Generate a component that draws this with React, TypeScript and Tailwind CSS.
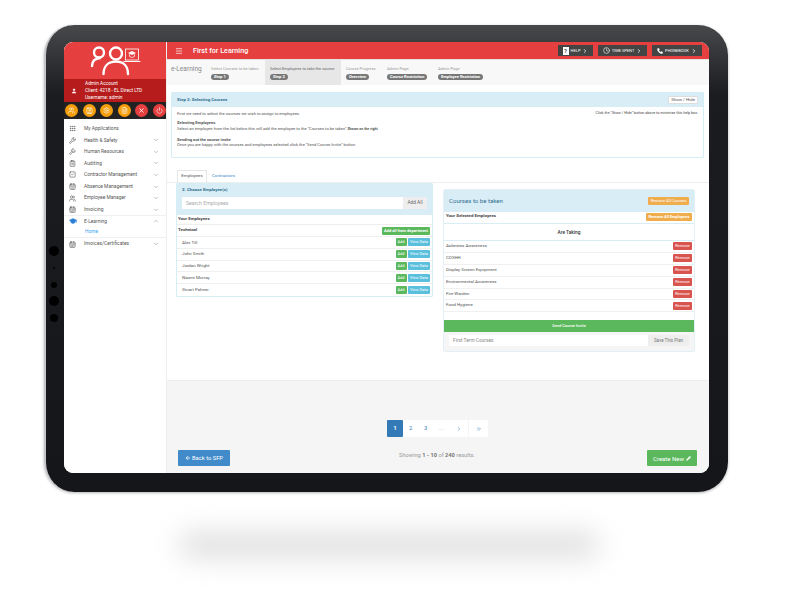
import {
  Wrench,
  Gavel,
  ClipboardList,
  SquareCheck,
  CalendarDays,
  Users,
  CalendarRange,
  GraduationCap,
  ChevronDown,
  ChevronUp,
  ChevronRight,
  ChevronsRight,
  Menu,
  User,
  Contact,
  Settings,
  Clock,
  Phone,
  Power,
  X,
  ArrowLeft,
  Pencil,
  Grip,
  FileText,
} from "lucide-react";

const menu = [
  { label: "My Applications", icon: Grip, arrow: false },
  { label: "Health & Safety", icon: Wrench, arrow: true },
  { label: "Human Resources", icon: Gavel, arrow: true },
  { label: "Auditing", icon: ClipboardList, arrow: true },
  { label: "Contractor Management", icon: SquareCheck, arrow: true },
  { label: "Absence Management", icon: CalendarDays, arrow: true },
  { label: "Employee Manager", icon: Users, arrow: true },
  { label: "Invoicing", icon: CalendarRange, arrow: true },
];

const steps = [
  { title: "Select Courses to be taken", pill: "Step 1", width: "w-[59px]" },
  { title: "Select Employees to take the course", pill: "Step 2", width: "w-[76px]", active: true },
  { title: "Course Progress", pill: "Overview", width: "w-[41px]" },
  { title: "Admin Page", pill: "Course Restriction", width: "w-[51px]" },
  { title: "Admin Page", pill: "Employee Restriction", width: "w-[60px]" },
];

const employees = ["Alex Till", "John Smith", "Jordan Wright", "Naomi Murray", "Stuart Palmer"];
const courses = [
  "Asbestos Awareness",
  "COSHH",
  "Display Screen Equipment",
  "Environmental Awareness",
  "Fire Warden",
  "Food Hygiene",
];

function Logo() {
  return (
    <svg width="54" height="34" viewBox="0 0 54 34" fill="none" stroke="white" strokeWidth="2.4" strokeLinecap="round">
      <circle cx="11" cy="10.5" r="5" />
      <path d="M4 24c0-5 3-7.5 8-8" />
      <circle cx="28" cy="11.5" r="6" />
      <path d="M15.5 32c0-8 5-12.5 12.5-12.5S40 24 40 32" />
      <rect x="37.5" y="7" width="13" height="11" strokeWidth="0.8" />
      <path d="M36 19.5h16" strokeWidth="1" />
      <path d="M44 9l4 2-4 2-4-2z" fill="white" stroke="none" />
      <path d="M41.5 12.5v2l2.5 1 2.5-1v-2" strokeWidth="0.7" />
    </svg>
  );
}

function Sidebar() {
  return (
    <aside className="flex w-[102px] shrink-0 flex-col bg-white">
      <div className="flex h-[37px] items-start justify-center bg-[#e53f3f]">
        <Logo />
      </div>
      <div className="flex h-[23px] items-center bg-[#b71c1c] text-[4.8px] leading-[7px] text-white">
        <div className="flex w-[20px] justify-center">
          <User size={6} fill="white" strokeWidth={1} />
        </div>
        <div className="pl-[1px]">
          <div>Admin Account</div>
          <div>Client: 4218 - EL Direct LTD</div>
          <div>Username: admin</div>
        </div>
      </div>
      <div className="flex h-[17px] items-center justify-between bg-[#222222] pl-[1px]">
        {[Users, Contact, Settings, FileText].map((Icon, i) => (
          <span key={i} className="flex size-[13px] items-center justify-center rounded-full bg-[#f59e0b] text-white">
            <Icon size={7} />
          </span>
        ))}
        <span className="flex size-[13px] items-center justify-center rounded-full bg-[#e53f3f] text-white">
          <X size={7} strokeWidth={3} />
        </span>
        <span className="flex size-[13px] items-center justify-center rounded-full bg-[#e53f3f] text-white">
          <Power size={7} />
        </span>
      </div>
      <nav className="flex flex-col pt-[4px] text-[#555555]">
        {menu.map((item) => (
          <div key={item.label} className="flex h-[11.55px] items-center text-[4.9px]">
            <div className="flex w-[20px] justify-center pr-[3px]">
              <item.icon size={7} strokeWidth={2} />
            </div>
            <span className="flex-1">{item.label}</span>
            {item.arrow && <ChevronDown size={6} className="mr-[7px] text-[#888888]" />}
          </div>
        ))}
        <div className="flex h-[11px] items-center border-t border-[#f0f0f0] text-[4.9px]">
          <div className="flex w-[20px] justify-center pr-[3px] text-[#2b7fd6]">
            <GraduationCap size={8} fill="#2b7fd6" />
          </div>
          <span className="flex-1">E-Learning</span>
          <ChevronUp size={6} className="mr-[7px] text-[#888888]" />
        </div>
        <div className="flex h-[12px] items-center border-b border-[#f0f0f0] pl-[21px] text-[4.9px] text-[#3ea6ee]">
          Home
        </div>
        <div className="flex h-[11.5px] items-center text-[4.9px]">
          <div className="flex w-[20px] justify-center pr-[3px]">
            <CalendarRange size={7} />
          </div>
          <span className="flex-1">Invoices/Certificates</span>
          <ChevronDown size={6} className="mr-[7px] text-[#888888]" />
        </div>
      </nav>
    </aside>
  );
}

function HeaderButton({ label, icon, width }: { label: string; icon: React.ReactNode; width: string }) {
  return (
    <div className={`flex h-[11px] items-center justify-center gap-[2px] bg-[#444444] text-[4px] text-white ${width}`}>
      {icon}
      <span>{label}</span>
      <ChevronRight size={6} strokeWidth={3} />
    </div>
  );
}

function TopBar() {
  return (
    <header className="flex h-[17px] shrink-0 items-center bg-[#e53f3f] text-white">
      <Menu size={8} className="ml-[8px]" />
      <span className="ml-[10px] flex-1 pt-[1px] text-[7.2px] font-medium">First for Learning</span>
      <div className="flex items-center gap-[5px] pr-[7px]">
        <HeaderButton
          label="HELP"
          width="w-[35px]"
          icon={<span className="flex h-[8px] w-[6px] items-center justify-center bg-white text-[6px] font-bold text-[#444444]">?</span>}
        />
        <HeaderButton label="TIME SPENT" width="w-[49px]" icon={<Clock size={7} />} />
        <HeaderButton label="PHONEBOOK" width="w-[50px]" icon={<Phone size={6} fill="white" />} />
      </div>
    </header>
  );
}

function StepBar() {
  return (
    <div className="flex h-[26px] shrink-0 items-stretch border-t border-[#e4e4e4] bg-[#f8f8f8]">
      <div className="w-[39px] pt-[5px] pl-[4px] text-[6.6px] whitespace-nowrap text-[#888888]">e-Learning</div>
      {steps.map((step) => (
        <div
          key={step.pill}
          className={`flex flex-col items-start pt-[6px] pl-[5px] text-[4px] whitespace-nowrap ${step.width} ${
            step.active ? "bg-[#e7e7e7] text-[#666666]" : "text-[#999999]"
          }`}
        >
          <span>{step.title}</span>
          <span className="mt-[1.5px] rounded-full bg-[#777777] px-[3px] text-[4.1px] leading-[6px] font-bold text-white">
            {step.pill}
          </span>
        </div>
      ))}
    </div>
  );
}

function HelpPanel() {
  return (
    <section className="mt-[7px] mr-[5px] ml-[4px] h-[66px] rounded-[1px] border border-[#d6eef5] bg-white">
      <div className="flex h-[14px] items-center justify-between bg-[#d9edf7] pr-[5px] pl-[5px] text-[4.35px] font-bold text-[#31708f]">
        <span>Step 2: Selecting Courses</span>
        <span className="rounded-[1px] border border-[#dddddd] bg-white px-[2px] text-[4.4px] leading-[6px] font-normal text-[#555555]">
          Show / Hide
        </span>
      </div>
      <div className="px-[5px] pt-[4px] text-[4.1px] leading-[5.4px] text-[#555555]">
        <div className="flex justify-between">
          <span>First we need to select the courses we wish to assign to employees.</span>
          <span className="text-[3.7px] text-[#444444]">Click the "Show / Hide" button above to minimise this help box.</span>
        </div>
        <div className="mt-[4px] font-bold">Selecting Employees</div>
        <div>
          Select an employee from the list below this will add the employee to the "Courses to be taken"{" "}
          <b className="text-[3.6px]">Shown on the right</b>
        </div>
        <div className="mt-[4.7px] font-bold">Sending out the course invite</div>
        <div>Once you are happy with the courses and employees selected click the "Send Course Invite" button</div>
      </div>
    </section>
  );
}

function Btn({ children, color, width }: { children: React.ReactNode; color: string; width: string }) {
  return (
    <span className={`flex h-[8px] items-center justify-center rounded-[1px] text-[4px] whitespace-nowrap text-white ${color} ${width}`}>
      {children}
    </span>
  );
}

function EmployeesPanel() {
  return (
    <div className="w-[257px] shrink-0 rounded-[1px] border border-[#d6eef5] text-[4.4px] text-[#555555]">
      <div className="h-[31px] bg-[#d9edf7] px-[5px] pt-[3px]">
        <div className="text-[4.4px] font-bold text-[#31708f]">2. Choose Employee(s)</div>
        <div className="mt-[3px] flex h-[12px] rounded-[1px] bg-white">
          <span className="flex-1 pl-[4px] text-[5.2px] leading-[12px] text-[#aaaaaa]">Search Employees</span>
          <span className="w-[24px] bg-[#eeeeee] text-center text-[4.8px] leading-[12px] text-[#666666]">Add All</span>
        </div>
      </div>
      <div className="flex h-[10px] items-center border-b border-[#eeeeee] pl-[1px] font-bold text-[#444444]">Your Employees</div>
      <div className="flex h-[12px] items-center justify-between border-b border-[#eeeeee] pr-[2px] pl-[1px] font-bold text-[#444444]">
        <span className="self-start pt-[1px] leading-[7px]">Technical</span>
        <Btn color="bg-[#5cb85c]" width="w-[48px]">Add all from department</Btn>
      </div>
      {employees.map((name) => (
        <div key={name} className="flex h-[11.8px] items-center border-b border-[#f0f0f0] pr-[2px] pl-[5px] last:border-0">
          <span className="flex-1 self-start pt-[1.5px] leading-[7px]">{name}</span>
          <div className="flex gap-[1.5px]">
            <Btn color="bg-[#5cb85c]" width="w-[11px]">Add</Btn>
            <Btn color="bg-[#5bc0de]" width="w-[22px]">View Data</Btn>
          </div>
        </div>
      ))}
    </div>
  );
}

function CoursesPanel() {
  return (
    <div className="mt-[6px] w-[252px] shrink-0 rounded-[2px] border border-[#e3f0f5] text-[4.4px] text-[#555555]">
      <div className="flex h-[22px] items-center justify-between bg-[#d9edf7] pr-[5px] pl-[5px]">
        <span className="text-[6.1px] text-[#31708f]">Courses to be taken</span>
        <Btn color="bg-[#f0ad4e]" width="w-[41px]">Remove All Courses</Btn>
      </div>
      <div className="flex h-[12px] items-start justify-between border-b border-[#d9edf7] pt-[1px] pr-[2px] pl-[2px] font-bold text-[#444444]">
        <span>Your Selected Employees</span>
        <Btn color="bg-[#f0ad4e]" width="w-[46px]">Remove All Employees</Btn>
      </div>
      <div className="h-[17px] border-b border-[#d9edf7] pt-[5px] text-center text-[4.8px] font-medium text-[#333333]">Are Taking</div>
      {courses.map((course) => (
        <div key={course} className="flex h-[11.9px] items-center justify-between border-b border-[#f0f0f0] pr-[2px] pl-[2px]">
          <span className="self-start pt-[1px] leading-[7px]">{course}</span>
          <Btn color="bg-[#d9534f]" width="w-[19px]">Remove</Btn>
        </div>
      ))}
      <div className="mt-[8px] flex h-[12px] items-center justify-center bg-[#5cb85c] text-[4px] font-medium text-white">
        Send Course Invite
      </div>
      <div className="h-[19px] bg-[#f5f5f5] px-[5px] pt-[3px]">
        <div className="flex h-[11px]">
          <span className="flex-1 bg-white pl-[4px] text-[4.8px] leading-[11px] text-[#888888]">First Term Courses</span>
          <span className="w-[41px] bg-[#eeeeee] text-center text-[4.5px] leading-[11px] text-[#777777]">Save This Plan</span>
        </div>
      </div>
    </div>
  );
}

function Footer() {
  return (
    <div className="flex flex-1 flex-col bg-[#f5f5f5] pr-[12px] pl-[11px]">
      <div className="mt-[39px] flex h-[17px] pl-[209px] text-[5.6px] text-[#337ab7]">
        <span className="flex w-[16px] items-center justify-center rounded-[1px] bg-[#337ab7] font-bold text-white">1</span>
        <span className="flex w-[15px] items-center justify-center bg-white">2</span>
        <span className="flex w-[15px] items-center justify-center bg-white">3</span>
        <span className="flex w-[16px] items-center justify-center bg-white text-[#aaaaaa]">...</span>
        <span className="flex w-[19px] items-center justify-center bg-white">
          <ChevronRight size={6} />
        </span>
        <span className="ml-[1px] flex w-[19px] items-center justify-center bg-white">
          <ChevronsRight size={6} />
        </span>
      </div>
      <div className="mt-[13px] flex h-[17px] items-start">
        <span className="flex h-[16px] w-[52px] items-center justify-center gap-[1px] rounded-[1px] bg-[#428bca] text-[5.8px] text-white">
          <ArrowLeft size={6} strokeWidth={3} />
          Back to SFP
        </span>
        <span className="ml-[169px] pt-[1px] text-[5.7px] leading-[8px] text-[#999999]">
          Showing <b className="text-[#777777]">1 - 10</b> of <b className="text-[#777777]">240</b> results.
        </span>
        <span className="ml-auto flex h-[16px] w-[50px] items-center justify-center gap-[2px] rounded-[1px] bg-[#5cb85c] text-[6px] text-white">
          Create New
          <Pencil size={5} fill="white" />
        </span>
      </div>
    </div>
  );
}

function Screen() {
  return (
    <div className="flex h-[431px] w-[645px] overflow-hidden rounded-[9px] bg-white">
      <Sidebar />
      <main className="flex min-w-0 flex-1 flex-col border-l border-[#eeeeee]">
        <TopBar />
        <StepBar />
        <HelpPanel />
        <div className="mt-[12px] flex h-[13px] border-b border-[#eeeeee] pl-[10px] text-[4.4px]">
          <span className="flex w-[30px] items-center justify-center rounded-t-[1px] border border-b-0 border-[#e5e5e5] bg-white text-[#555555]">
            Employees
          </span>
          <span className="flex w-[33px] items-center justify-center text-[#428bca]">Contractors</span>
        </div>
        <div className="flex h-[198px] items-start gap-[10px] border-b border-[#eeeeee] pl-[9px]">
          <EmployeesPanel />
          <CoursesPanel />
        </div>
        <Footer />
      </main>
    </div>
  );
}

export default function App() {
  return (
    <div className="h-[591px] w-[790px] overflow-hidden bg-white pt-[25px] pl-[44px] font-['Roboto',sans-serif]">
      <div className="flex h-[467px] w-[684px] rounded-[30px] border-l-[2px] border-[#c4c5c7] bg-linear-to-b from-[#48494b] via-[#1b1c20] via-15% to-[#15161a] pt-[17px] shadow-[0_1px_3px_rgba(0,0,0,0.3)]">
        <div className="flex w-[18px] shrink-0 flex-col items-center pt-[204px] pr-[3px]">
          <span className="size-[10px] rounded-full bg-black" />
          <span className="mt-[11px] size-[2px] rounded-full bg-black" />
          <span className="mt-[13px] size-[6px] rounded-full bg-black" />
          <span className="mt-[8px] size-[10px] rounded-full bg-black" />
          <span className="mt-[8px] size-[8px] rounded-full bg-black" />
        </div>
        <Screen />
      </div>
      <div className="mt-[41px] ml-[135px] h-[24px] w-[420px] rounded-full bg-[#dcdcdc] blur-[14px]" />
    </div>
  );
}
